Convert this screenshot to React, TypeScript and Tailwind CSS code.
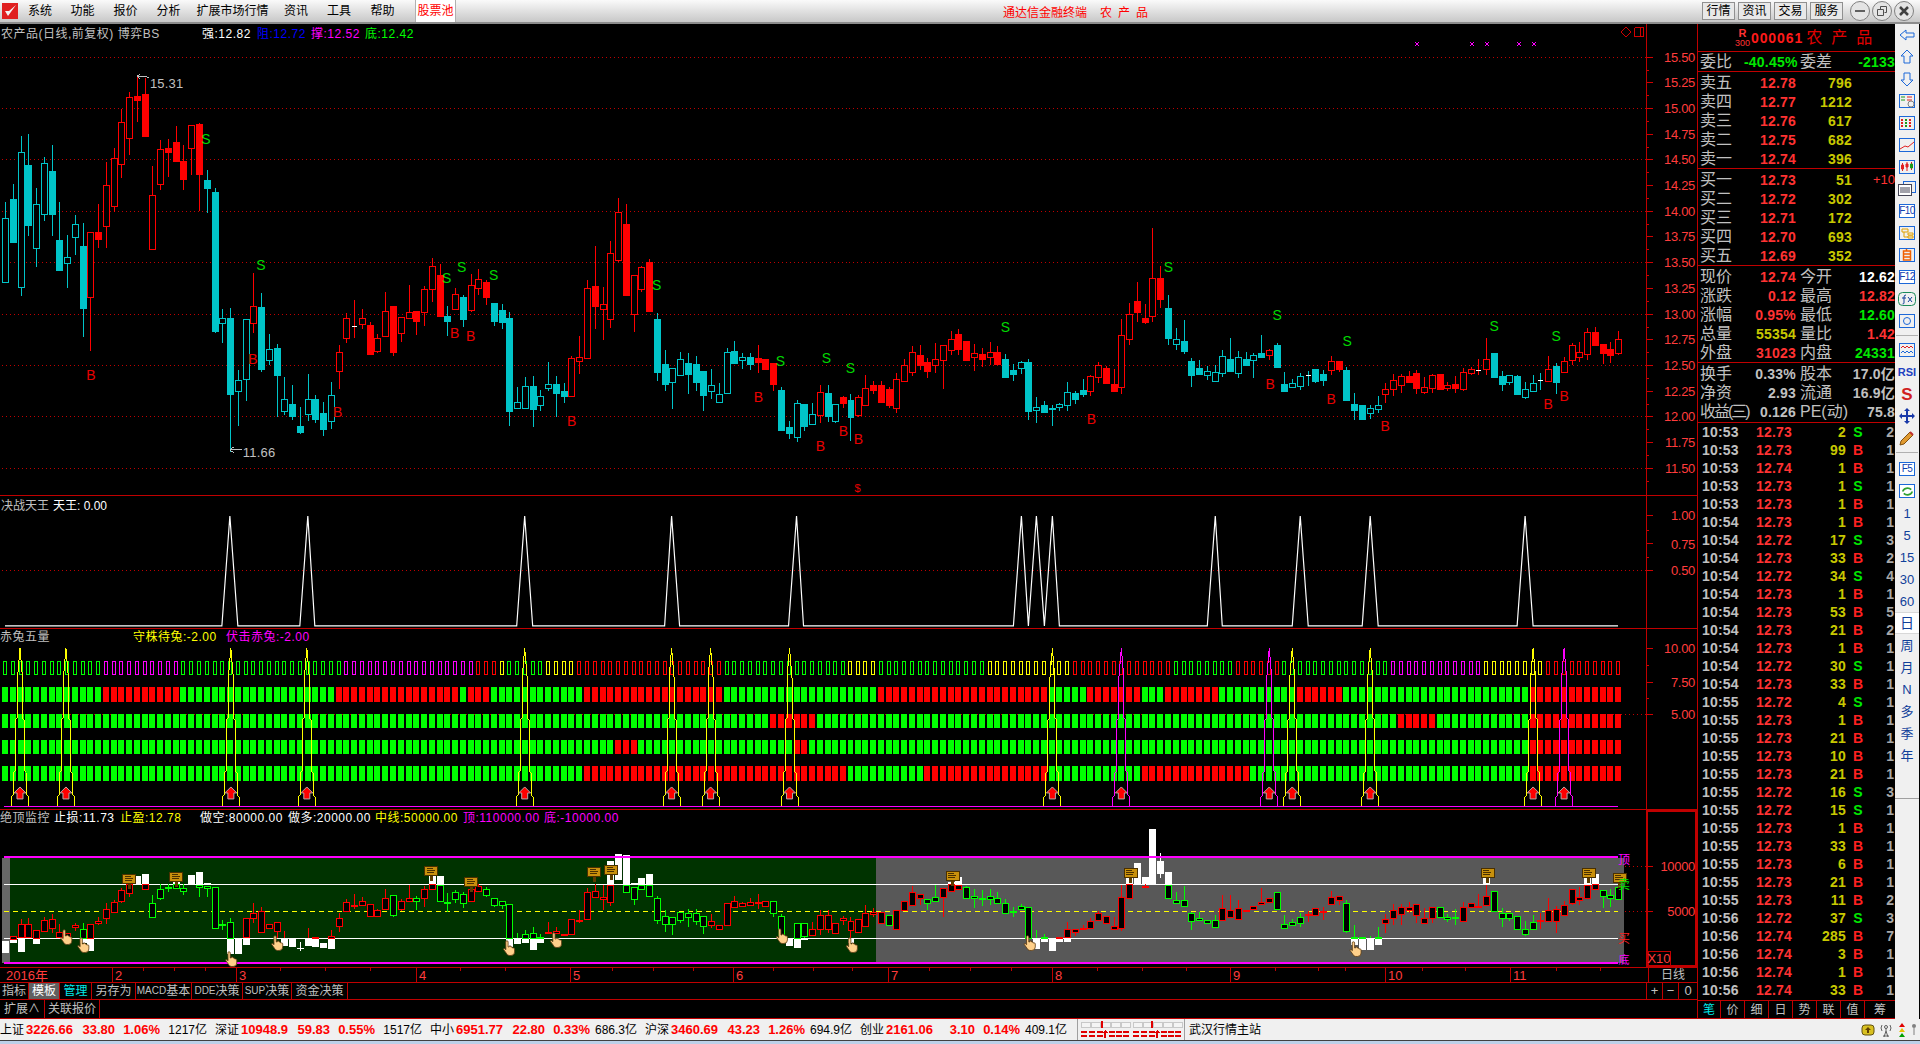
import type { ReactNode } from 'react';

type Bar = [string, number, number, number, number];

const RED = '#ff0000';
const CYAN = '#00c4c8';
const GREEN = '#00ff00';
const GRID = '#c00000';
const AXIS = '#ff3c3c';
const barX = (i: number) => Math.round(5 + 7.76 * i);

// main chart: type, body top, body bottom, wick top, wick bottom (page px)
const KLINE: Bar[] = [
  ['C',218,282,202,282],['c',199,243,184,243],['C',152,287,136,296],['c',165,226,134,236],['C',204,248,188,267],
  ['C',163,214,157,221],['c',171,215,145,236],['c',240,271,202,271],['C',257,263,235,288],['C',224,237,215,255],
  ['c',246,309,223,337],['R',232,297,232,351],['r',232,240,204,248],['R',185,226,162,248],['R',158,206,148,212],
  ['R',122,164,109,178],['R',97,138,92,155],['r',96,101,77,122],['r',94,137,78,137],['R',195,249,166,249],
  ['R',149,184,140,190],['r',148,153,139,177],['r',142,162,126,162],['r',161,180,145,190],['R',125,148,125,175],
  ['r',124,175,123,211],['c',180,189,170,213],['c',192,332,188,333],['C',318,323,309,343],['c',318,395,308,452],
  ['C',380,391,370,426],['C',319,379,319,401],['R',306,323,273,333],['c',307,370,293,372],['C',349,360,334,365],
  ['c',348,376,344,417],['C',399,411,377,415],['c',404,417,385,420],['c',426,433,407,434],['C',399,414,374,421],
  ['c',399,420,395,423],['c',413,430,402,436],['C',395,421,382,429],['R',352,371,345,389],['R',318,338,313,343],
  ['w',326,326,300,338],['R',318,324,309,329],['r',325,355,322,355],['R',338,351,334,353],['R',311,336,292,337],
  ['r',306,353,306,356],['R',317,333,317,342],['R',312,318,285,318],['r',311,322,311,335],['R',289,312,286,326],
  ['R',266,289,258,302],['r',275,317,264,317],['c',316,322,306,336],['R',294,309,288,309],['c',297,320,295,327],
  ['R',285,310,274,312],['R',279,288,269,295],['r',282,298,280,305],['c',303,322,303,326],['c',310,323,304,329],
  ['c',318,412,312,426],['C',402,408,387,408],['C',386,408,377,408],['c',386,410,376,427],['C',396,405,390,411],
  ['C',384,388,362,391],['c',384,394,376,417],['c',391,397,383,403],['R',358,396,356,397],['R',357,361,336,374],
  ['R',288,358,280,359],['r',286,307,246,329],['R',304,309,287,340],['R',253,319,241,328],['R',212,260,198,262],
  ['r',224,296,204,296],['R',275,314,275,332],['R',267,289,266,292],['r',262,312,259,312],['c',319,373,313,381],
  ['c',364,385,350,391],['C',368,382,368,409],['C',359,375,352,375],['c',363,375,353,394],['c',364,383,356,391],
  ['c',371,396,371,411],['C',385,391,369,399],['C',394,402,383,402],['C',352,393,348,393],['c',351,364,341,364],
  ['C',357,360,353,369],['c',357,365,353,370],['r',358,363,345,373],['r',359,370,359,370],['r',363,385,363,391],
  ['c',390,431,387,431],['c',427,434,421,439],['C',403,437,400,442],['c',404,427,404,431],['C',414,424,403,425],
  ['R',392,415,385,423],['c',393,417,385,422],['C',404,421,404,423],['r',397,404,396,408],['c',400,418,394,441],
  ['R',397,415,395,417],['R',388,405,375,405],['r',385,391,381,394],['r',385,403,381,403],['r',389,406,387,408],
  ['R',379,408,373,413],['R',365,381,359,381],['R',352,372,346,376],['r',355,366,345,370],['r',362,372,358,378],
  ['R',359,365,343,373],['R',345,360,345,389],['R',339,350,331,355],['r',334,350,329,355],['r',341,361,341,361],
  ['R',353,357,344,371],['r',354,360,348,367],['R',352,357,342,365],['r',352,365,346,365],['c',359,378,354,378],
  ['c',370,375,364,381],['C',362,368,361,374],['c',362,412,359,420],['C',407,410,397,423],['c',405,413,401,413],
  ['c',408,410,405,426],['C',404,407,403,411],['C',392,405,382,411],['c',393,400,391,404],['c',390,395,379,397],
  ['R',376,391,375,396],['R',365,377,362,383],['r',368,384,366,384],['r',384,392,369,392],['R',335,387,319,394],
  ['R',314,339,303,345],['r',301,313,282,322],['r',318,323,304,324],['R',278,316,228,322],['r',278,300,266,308],
  ['c',308,339,295,345],['C',339,344,328,350],['c',341,352,320,354],['c',361,376,358,387],['c',368,375,360,375],
  ['C',371,375,366,380],['C',372,381,365,381],['C',356,373,350,377],['c',359,372,338,372],['C',357,373,351,378],
  ['c',359,366,352,366],['C',355,360,353,378],['c',353,358,335,358],['R',350,355,349,360],['c',345,368,343,368],
  ['c',384,392,372,392],['C',383,387,379,387],['C',376,386,373,390],['W',375,375,371,386],['c',369,382,369,383],
  ['c',374,381,370,386],['R',361,370,356,375],['r',361,370,361,372],['c',370,401,367,401],['c',404,411,393,420],
  ['c',405,420,405,420],['C',408,413,405,419],['C',405,409,396,413],['R',389,394,383,403],['R',380,389,374,396],
  ['R',376,385,374,393],['r',376,383,371,383],['r',373,389,370,394],['R',387,392,377,394],['R',375,388,374,393],
  ['r',374,390,374,390],['R',385,388,382,391],['r',384,389,376,393],['R',372,389,368,391],['R',369,373,367,375],
  ['w',370,370,359,375],['R',359,369,338,375],['c',353,378,353,378],['c',376,385,371,391],['C',375,382,375,385],
  ['c',376,395,375,395],['C',389,397,382,399],['C',383,391,375,391],['W',380,380,373,390],['R',369,381,356,381],
  ['c',366,383,363,394],['R',361,372,357,372],['R',345,360,343,365],['R',352,357,342,362],['R',332,354,328,360],
  ['r',332,346,327,346],['r',344,354,344,364],['r',349,356,342,363],['R',339,353,331,355],
];

// bottom chart: type, body top/bottom, wick top/bottom, in y of the 3x crop (810 + y / 3)
const MONITOR: Bar[] = [
  ['n',0,0,0,0],['r',378,388,378,388],['r',343,382,327,382],['r',343,380,325,380],['r',360,385,360,385],['r',331,362,322,362],
  ['r',327,355,312,370],['r',367,382,342,382],['r',370,378,370,378],['r',346,352,340,362],['g',356,385,340,385],['r',341,385,341,385],
  ['r',333,338,320,345],['r',298,325,280,342],['r',275,307,270,307],['r',241,274,233,280],['r',222,250,222,260],['n',0,0,0,0],
  ['r',222,236,222,236],['g',280,322,255,322],['g',238,265,222,270],['g',230,230,222,245],['g',222,235,222,235],['g',233,244,222,255],
  ['n',0,0,0,0],['g',224,230,224,262],['g',229,235,229,262],['g',232,355,232,355],['g',341,341,330,360],['g',335,385,325,385],
  ['n',0,0,0,0],['r',325,382,325,382],['r',310,325,278,340],['r',304,365,290,365],['r',343,355,343,355],['r',337,364,337,385],
  ['r',0,0,364,385],['n',0,0,0,0],['n',0,0,0,0],['r',0,0,353,385],['r',382,385,382,385],['n',0,0,0,0],
  ['r',377,385,360,385],['r',323,347,310,365],['r',277,304,268,304],['r',285,285,252,298],['r',274,284,262,284],['r',283,319,283,319],
  ['r',301,319,298,319],['r',263,298,238,298],['g',256,316,256,322],['r',272,296,268,304],['r',265,274,225,274],['g',264,274,258,300],
  ['r',236,265,228,290],['r',222,236,222,236],['g',224,272,224,272],['g',277,277,250,305],['g',246,268,240,280],['g',252,280,245,295],
  ['r',238,272,222,272],['r',228,244,222,244],['g',236,254,230,262],['g',265,285,265,292],['g',274,286,274,296],['g',283,385,283,385],
  ['g',0,0,370,385],['g',371,385,360,385],['g',368,385,352,385],['g',380,385,373,385],['r',366,366,337,370],['r',362,370,352,370],
  ['r',371,371,371,371],['r',328,372,328,372],['r',330,330,300,340],['r',245,328,234,328],['r',242,262,222,262],['r',262,268,225,300],
  ['r',225,277,225,287],['n',0,0,0,0],['g',225,245,225,245],['g',230,268,230,285],['g',225,236,225,236],['g',225,257,225,257],
  ['g',265,329,258,342],['g',318,341,300,365],['g',322,341,322,375],['g',307,329,307,340],['g',310,322,297,352],['g',310,332,297,345],
  ['g',319,347,319,372],['r',334,344,312,355],['r',346,358,346,358],['r',280,344,280,344],['r',274,290,258,290],['r',280,287,275,287],
  ['r',277,284,265,284],['r',275,275,252,298],['r',272,287,272,287],['g',274,308,274,320],['g',318,375,313,375],['n',0,0,0,0],
  ['g',340,385,340,385],['g',340,378,340,385],['r',358,376,335,376],['r',314,358,300,375],['r',316,356,300,368],['r',340,370,340,370],
  ['r',324,331,318,345],['r',334,361,320,385],['r',328,365,328,365],['r',310,347,285,347],['r',305,311,295,320],['r',307,338,307,338],
  ['g',316,346,316,346],['r',300,358,300,358],['r',272,301,272,301],['r',245,286,228,286],['r',251,265,251,285],['g',268,280,268,300],
  ['g',262,274,225,274],['r',233,262,233,322],['r',222,244,222,244],['r',225,237,225,237],['g',230,265,228,265],['g',257,265,237,294],
  ['g',263,263,240,288],['g',259,268,238,285],['g',263,280,245,280],['g',278,310,268,310],['g',304,304,292,320],['g',289,298,283,298],
  ['g',290,385,290,385],['g',0,0,360,385],['g',380,385,372,385],['n',0,0,0,0],['r',380,385,380,385],['r',357,381,335,381],
  ['r',358,366,358,378],['r',353,358,345,358],['r',332,354,325,354],['r',310,331,302,331],['r',317,340,317,340],['r',348,357,320,357],
  ['r',260,355,225,363],['r',222,265,222,265],['n',0,0,0,0],['r',228,228,222,232],['n',0,0,0,0],['n',0,0,0,0],
  ['g',225,265,225,265],['g',271,278,247,278],['g',271,287,228,287],['g',310,333,305,360],['g',325,331,305,331],['g',331,338,331,338],
  ['g',331,350,315,350],['r',295,331,255,331],['r',301,322,256,322],['r',295,328,270,328],['r',299,304,299,304],['r',287,296,287,300],
  ['r',277,281,235,281],['r',265,277,265,277],['g',246,298,246,298],['g',343,355,315,355],['g',337,345,327,345],['g',320,340,308,350],
  ['r',312,312,303,335],['r',293,316,293,316],['r',304,304,290,330],['r',260,283,243,283],['r',257,271,257,285],['g',280,362,270,368],
  ['g',380,385,345,385],['g',382,385,382,385],['g',0,0,378,385],['g',380,385,352,385],['r',328,340,312,368],['r',299,324,282,345],
  ['r',290,313,282,345],['r',290,299,275,310],['r',281,316,281,340],['r',325,338,295,338],['r',290,325,290,338],['g',290,322,290,322],
  ['g',322,328,312,335],['g',320,320,298,345],['r',290,334,275,334],['r',280,290,280,290],['r',288,288,252,295],['r',257,286,225,286],
  ['g',242,304,242,304],['g',310,325,295,350],['g',310,325,310,332],['g',317,358,317,358],['g',356,373,333,378],['g',337,358,316,358],
  ['r',330,330,310,358],['r',301,332,265,332],['r',296,332,288,368],['r',284,314,272,314],['r',238,280,238,285],['r',260,271,232,286],
  ['r',224,265,224,265],['r',222,236,222,236],['g',241,259,241,295],['g',256,265,238,292],['g',232,268,232,268],
];

const WHITE_BARS = [
  [0,393,428],[1,388,400],[2,382,425],[4,385,402],[10,385,400],[11,385,422],[17,197,222],[18,192,222],[22,215,222],[24,196,222],[25,186,222],
  [26,218,222],[29,385,433],[30,385,431],[31,385,404],[36,385,408],[37,385,410],[39,385,407],[40,385,410],[41,400,415],[42,385,418],[55,198,222],
  [56,198,222],[65,385,410],[66,385,402],[67,385,398],[68,385,420],[69,385,398],[78,152,222],[79,133,210],[80,135,222],[81,220,222],[82,205,222],
  [83,192,222],[101,385,408],[102,385,413],[103,385,390],[109,385,400],[122,215,222],[123,200,222],[133,385,417],[134,385,397],[135,385,423],
  [136,385,395],[137,385,395],[145,205,222],[146,160,222],[147,200,222],[148,57,222],[149,153,192],[150,186,222],[174,385,405],[175,385,420],
  [176,385,420],[177,385,404],[191,205,222],[204,195,222],[205,192,222],
];

const MARKS: [string, number, number][] = [
  ['S',206,139],['B',91,375],['S',261,265],['B',253,359],['S',447,278],['B',338,412],['S',462,267],['B',455,333],['B',471,336],['S',494,275],
  ['B',572,421],['S',657,285],['B',759,397],['S',781,361],['S',827,358],['S',851,368],['B',821,446],['B',844,431],['B',859,439],['S',1006,327],
  ['B',1092,419],['S',1169,267],['S',1278,315],['B',1271,384],['B',1332,399],['S',1348,341],['B',1386,426],['S',1495,326],['B',1549,404],
  ['B',1565,396],['S',1557,336],
];

const PEAKS = [29, 39, 67, 86, 102, 131, 133, 135, 156, 167, 176, 196];
const ARROWS: [number, string][] = [
  [20,'#ffff00'],[66,'#ffff00'],[231,'#ffff00'],[307,'#ffff00'],[525,'#ffff00'],[672,'#ffff00'],[711,'#ffff00'],[790,'#ffff00'],
  [1053,'#ffff00'],[1122,'#ff00ff'],[1270,'#ff00ff'],[1293,'#ffff00'],[1371,'#ffff00'],[1534,'#ffff00'],[1565,'#ff00ff'],
];
const HANDS = [[66,939],[83,947],[231,961],[277,945],[509,950],[556,942],[782,938],[852,947],[1030,945],[1356,951]];
const SIGNS = [[129,879],[176,877],[431,871],[471,882],[594,872],[611,870],[953,876],[1131,873],[1488,873],[1589,873],[1620,878]];

// signal rows of the 赤兔五量 panel: from-index, to-index of each run
const ROW_TOP: [number, number, string][] = [
  [0,12,'#00ff00'],[13,22,'#ff00ff'],[23,43,'#00ff00'],[44,60,'#ff00ff'],[61,63,'#ff0000'],[64,64,'#ffff00'],[65,69,'#00ff00'],[70,73,'#ffff00'],
  [74,92,'#ff0000'],[93,108,'#00ff00'],[109,112,'#ffff00'],[113,126,'#00ff00'],[127,137,'#ffff00'],[138,150,'#ff0000'],[151,158,'#00ff00'],
  [159,164,'#ff0000'],[165,178,'#00ff00'],[179,190,'#ff00ff'],[191,198,'#ffff00'],[199,208,'#ff0000'],
];
const ROW_REDS: [number, number][][] = [
  [[13,19],[20,22],[43,58],[60,62],[75,92],[113,134],[140,146],[150,156],[167,172],[197,208]],
  [[99,104],[180,184],[197,208]],
  [[79,81],[102,103],[197,208]],
  [[75,108],[119,134],[147,160],[197,208]],
];

const TICKS: [string, string, string, string, string][] = [
  ['10:53','12.73','2','S','2'],['10:53','12.73','99','B','1'],['10:53','12.74','1','B','1'],['10:53','12.73','1','S','1'],
  ['10:53','12.73','1','B','1'],['10:54','12.73','1','B','1'],['10:54','12.72','17','S','3'],['10:54','12.73','33','B','2'],
  ['10:54','12.72','34','S','4'],['10:54','12.73','1','B','1'],['10:54','12.73','53','B','5'],['10:54','12.73','21','B','2'],
  ['10:54','12.73','1','B','1'],['10:54','12.72','30','S','1'],['10:54','12.73','33','B','1'],['10:55','12.72','4','S','1'],
  ['10:55','12.73','1','B','1'],['10:55','12.73','21','B','1'],['10:55','12.73','10','B','1'],['10:55','12.73','21','B','1'],
  ['10:55','12.72','16','S','3'],['10:55','12.72','15','S','1'],['10:55','12.73','1','B','1'],['10:55','12.73','33','B','1'],
  ['10:55','12.73','6','B','1'],['10:55','12.73','21','B','1'],['10:55','12.73','11','B','2'],['10:56','12.72','37','S','3'],
  ['10:56','12.74','285','B','7'],['10:56','12.74','3','B','1'],['10:56','12.74','1','B','1'],['10:56','12.74','33','B','1'],
];

function AxisLabel({ y, children }: { y: number; children: string }) {
  return (
    <text x={1696} y={y + 5} textAnchor="end" fontSize={13} fill={AXIS} letterSpacing={-0.3}>
      {children}
    </text>
  );
}

function Tick({ y, major }: { y: number; major?: boolean }) {
  return <line x1={1648} x2={major ? 1654 : 1650} y1={y + 0.5} y2={y + 0.5} stroke="#d00000" />;
}

function Dotted({ y, x1 = 2, x2 = 1654 }: { y: number; x1?: number; x2?: number }) {
  return <line x1={x1} x2={x2} y1={y + 0.5} y2={y + 0.5} stroke={GRID} strokeDasharray="1 3" />;
}

function VerticalAxis({ y1, y2 }: { y1: number; y2: number }) {
  return <line x1={1647.5} x2={1647.5} y1={y1} y2={y2} stroke="#c00000" />;
}

function MainChart() {
  const labels = ['15.50','15.25','15.00','14.75','14.50','14.25','14.00','13.75','13.50','13.25','13.00','12.75','12.50','12.25','12.00','11.75','11.50'];
  return (
    <svg className="block h-[471px] w-full" viewBox="0 24 1698 471" shapeRendering="crispEdges">
      {labels.map((l, i) => {
        const y = Math.round(56.5 + 25.7 * i);
        return (
          <g key={l}>
            {i % 2 === 0 && <Dotted y={y} />}
            <Tick y={y} major />
            <Tick y={y + 13} />
            <AxisLabel y={y}>{l}</AxisLabel>
          </g>
        );
      })}
      <VerticalAxis y1={24} y2={495} />
      {KLINE.map(([t, bt, bb, wt, wb], i) => {
        const x = barX(i);
        const isRed = t === 'r' || t === 'R' || t === 'w';
        const color = isRed ? RED : CYAN;
        return (
          <g key={i}>
            <line x1={x + 0.5} x2={x + 0.5} y1={wt} y2={wb} stroke={color} />
            {(t === 'r' || t === 'c') && <rect x={x - 3} y={bt} width={7} height={bb - bt} fill={color} />}
            {(t === 'R' || t === 'C') && (
              <rect x={x - 2.5} y={bt + 0.5} width={6} height={bb - bt} fill="#000" stroke={color} />
            )}
            {(t === 'w' || t === 'W') && <line x1={x - 2} x2={x + 3} y1={bt + 0.5} y2={bt + 0.5} stroke="#fff" />}
          </g>
        );
      })}
      {MARKS.map(([m, x, y], i) => (
        <text key={i} x={x} y={y + 5} textAnchor="middle" fontSize={14} fill={m === 'S' ? '#00d800' : '#e80000'} shapeRendering="auto">
          {m}
        </text>
      ))}
      <text x={858} y={492} textAnchor="middle" fontSize={11} fill="#e80000">$</text>
      <path d="M137 76l3 3M137 76l3-2M137 76h8l4 2" fill="none" stroke="#c0c0c0" />
      <text x={150} y={88} fontSize={13} fill="#c0c0c0" letterSpacing={0.2}>15.31</text>
      <path d="M230 450h12M230 450l4-3M230 450l4 3" fill="none" stroke="#c0c0c0" />
      <text x={243} y={457} fontSize={13} fill="#c0c0c0" letterSpacing={0.2}>11.66</text>
      {[1418, 1473, 1488, 1520, 1535].map((x) => (
        <path key={x} d={`M${x - 2} 42l4 4M${x + 2} 42l-4 4`} stroke="#ff00ff" fill="none" />
      ))}
      <path d="M1627 27l5 5-5 5-5-5z" fill="none" stroke="#d00000" />
      <path d="M1635.5 27.5h9v9h-9zM1641.5 27.5v9" fill="none" stroke="#d00000" />
    </svg>
  );
}

function DecisionChart() {
  const pts = KLINE.map((_, i) => `${barX(i)},${PEAKS.includes(i) ? 516 : 626}`).join(' ');
  return (
    <svg className="block h-[132px] w-full" viewBox="0 496 1698 132">
      <g shapeRendering="crispEdges">
        <Dotted y={570} />
        <Tick y={515} major />
        <Tick y={530} />
        <Tick y={543} major />
        <Tick y={557} />
        <Tick y={570} major />
        <VerticalAxis y1={496} y2={628} />
      </g>
      <AxisLabel y={515}>1.00</AxisLabel>
      <AxisLabel y={544}>0.75</AxisLabel>
      <AxisLabel y={570}>0.50</AxisLabel>
      <polyline points={pts} fill="none" stroke="#fff" strokeWidth={1.2} />
    </svg>
  );
}

function RabbitChart() {
  const topColor = (i: number) => ROW_TOP.find(([a, b]) => i >= a && i <= b)?.[2] ?? '#00ff00';
  const rows = [
    [687, 15],
    [714, 14],
    [740, 14],
    [766, 15],
  ];
  return (
    <svg className="block h-[180px] w-full" viewBox="0 629 1698 180" shapeRendering="crispEdges">
      <Tick y={648} major />
      <Tick y={665} />
      <Tick y={682} major />
      <Tick y={698} />
      <Tick y={714} major />
      <VerticalAxis y1={629} y2={809} />
      <AxisLabel y={648}>10.00</AxisLabel>
      <AxisLabel y={682}>7.50</AxisLabel>
      <AxisLabel y={714}>5.00</AxisLabel>
      <Dotted y={714} />
      {KLINE.map((_, i) => {
        const x = barX(i);
        return (
          <g key={i}>
            <rect x={x - 1.5} y={661.5} width={3} height={13} fill="none" stroke={topColor(i)} />
            {rows.map(([y, h], r) => (
              <rect
                key={r}
                x={x - 3}
                y={y}
                width={6}
                height={h}
                fill={ROW_REDS[r].some(([a, b]) => i >= a && i <= b) ? RED : GREEN}
              />
            ))}
          </g>
        );
      })}
      <rect x={4} y={806} width={1615} height={1} fill="#ff00ff" />
      {ARROWS.map(([cx, color]) => (
        <g key={cx}>
          <path
            d={`M${cx - 8.5} 806V797L${cx - 6.5} 795V773L${cx - 4.5} 771V720L${cx - 2.5} 718V678L${cx} 648L${cx + 2.5} 678V718L${cx + 4.5} 720V771L${cx + 6.5} 773V795L${cx + 8.5} 797V806`}
            fill="none"
            stroke={color}
          />
          <path
            d={`M${cx} 787l6 6h-3v6h-6v-6h-3z`}
            fill={RED}
            stroke="#b8a8a8"
            shapeRendering="auto"
          />
        </g>
      ))}
    </svg>
  );
}

function Hand({ x, y }: { x: number; y: number }) {
  return (
    <path
      transform={`translate(${x} ${y})`}
      d="M-3-8a1.2 1.2 0 0 1 2.4 0v5l1 0 .1-1h1.5l.2 1h1.4l.2 1h1.2q.9 0 .9 1v3q0 3.500-3.500 3.500h-2q-2 0-3-2.500l-2.500-3.500q-.4-1.200 1.100-.8l1.200 1z"
      fill="#ffd08a"
      stroke="#5a3a12"
      strokeWidth={0.8}
    />
  );
}

function Sign({ x, y }: { x: number; y: number }) {
  return (
    <g transform={`translate(${x} ${y})`} shapeRendering="crispEdges">
      <rect x={-1} y={4} width={3} height={6} fill="#5c3c00" />
      <rect x={-6} y={-5} width={13} height={9} fill="#c8900c" stroke="#4a3000" />
      <rect x={-4} y={-3} width={6} height={1} fill="#4a3000" />
      <rect x={-4} y={-1} width={8} height={1} fill="#4a3000" />
      <rect x={-4} y={1} width={7} height={1} fill="#4a3000" />
    </g>
  );
}

function MonitorChart() {
  const top = (v: number) => Math.round(810 + v / 3);
  return (
    <svg className="block h-[157px] w-full" viewBox="0 810 1698 157" shapeRendering="crispEdges">
      <Dotted y={866} x1={1626} />
      <Dotted y={911} x1={1626} />
      <Tick y={866} major />
      <Tick y={889} />
      <Tick y={911} major />
      <rect x={1648} y={811} width={49} height={155} fill="none" stroke="#c00000" strokeWidth={2} />
      <AxisLabel y={866}>10000</AxisLabel>
      <AxisLabel y={911}>5000</AxisLabel>
      <rect x={1649.5} y={951.5} width={22} height={14} fill="none" stroke="#c00000" />
      <text x={1660} y={963} textAnchor="middle" fontSize={13} fill={AXIS}>X10</text>

      <rect x={2} y={858} width={8} height={105} fill="#666666" />
      <rect x={10} y={858} width={867} height={105} fill="#003300" />
      <rect x={877} y={858} width={748} height={105} fill="#585858" />
      {WHITE_BARS.map(([i, a, b]) => (
        <rect key={i} x={barX(i) - 3} y={top(a)} width={7} height={top(b) - top(a)} fill="#fff" />
      ))}
      <line x1={barX(149) + 0.5} x2={barX(149) + 0.5} y1={top(130)} y2={top(205)} stroke="#fff" />
      <rect x={barX(38) - 3} y={top(415)} width={7} height={1} fill="#fff" />
      <line x1={barX(38) + 0.5} x2={barX(38) + 0.5} y1={top(395)} y2={top(422)} stroke="#fff" />
      <rect x={4} y={856} width={1615} height={2} fill="#ff00ff" />
      <rect x={4} y={962} width={1615} height={2} fill="#ff00ff" />
      <rect x={4} y={884} width={1615} height={1} fill="#fff" />
      <rect x={4} y={938} width={1615} height={1} fill="#fff" />
      <line x1={4} x2={1619} y1={911.5} y2={911.5} stroke="#ffff00" strokeDasharray="5 4" />
      {MONITOR.map(([t, bt, bb, wt, wb], i) => {
        if (t === 'n') return null;
        const x = barX(i);
        const color = t === 'r' ? RED : GREEN;
        const h = top(bb) - top(bt);
        return (
          <g key={i}>
            <line x1={x + 0.5} x2={x + 0.5} y1={top(wt)} y2={top(wb)} stroke={color} />
            {bt > 0 && h < 2 && <rect x={x - 3} y={top(bt)} width={7} height={2} fill={color} />}
            {bt > 0 && h >= 2 && (
              <rect x={x - 2.5} y={top(bt) + 0.5} width={6} height={h} fill="#000" stroke={color} />
            )}
          </g>
        );
      })}
      {SIGNS.map(([x, y]) => (
        <Sign key={x} x={x} y={y} />
      ))}
      <g shapeRendering="auto">
        {HANDS.map(([x, y]) => (
          <Hand key={x} x={x} y={y} />
        ))}
      </g>
      <text x={1625} y={864} textAnchor="middle" fontSize={12} fill="#ff00ff">顶</text>
      <text x={1625} y={889} textAnchor="middle" fontSize={12} fill="#00e000">卖</text>
      <text x={1625} y={943} textAnchor="middle" fontSize={12} fill="#ff2020">买</text>
      <text x={1625} y={964} textAnchor="middle" fontSize={11} fill="#ff00ff">底</text>
    </svg>
  );
}

function DateAxis() {
  const months: [number, string][] = [
    [3,'2016年'],[112,'2'],[236,'3'],[416,'4'],[570,'5'],[733,'6'],[888,'7'],[1052,'8'],[1230,'9'],[1385,'10'],[1510,'11'],
  ];
  const minor = [143,174,205,280,325,370,460,505,612,653,693,773,813,852,929,970,1011,1097,1142,1186,1275,1318,1345,1422,1465,1556,1600];
  return (
    <svg className="block h-[15px] w-[1648px]" viewBox="0 967 1648 15" shapeRendering="crispEdges">
      {minor.map((x) => (
        <line key={x} x1={x + 0.5} x2={x + 0.5} y1={967} y2={970} stroke="#c00000" />
      ))}
      {months.map(([x, l], i) => (
        <g key={l}>
          {i > 0 && <line x1={x + 0.5} x2={x + 0.5} y1={967} y2={983} stroke="#c00000" />}
          <text x={x + 3} y={979} fontSize={13} fill={AXIS}>{l}</text>
        </g>
      ))}
    </svg>
  );
}

function Cell({ className, children }: { className: string; children: ReactNode }) {
  return <div className={`flex items-center justify-center whitespace-nowrap border-r border-[#c00000] text-[12px] leading-none ${className}`}>{children}</div>;
}

function ChartArea() {
  return (
    <div className="relative -ml-px flex w-[1698px] flex-col border-l border-[#808080]">
      <div className="relative h-[472px] border-b border-[#c00000]">
        <MainChart />
        <div className="absolute left-[1px] top-[1px] flex h-[18px] items-center text-[12px] tracking-[0.5px] text-[#c0c0c0]">
          农产品(日线,前复权) 博弈BS
          <span className="absolute left-[201px] whitespace-nowrap text-white">强:12.82</span>
          <span className="absolute left-[256px] whitespace-nowrap text-[#0000ff]">阻:12.72</span>
          <span className="absolute left-[310px] whitespace-nowrap text-[#ff00ff]">撑:12.52</span>
          <span className="absolute left-[364px] whitespace-nowrap text-[#00ff00]">底:12.42</span>
        </div>
      </div>
      <div className="relative h-[133px] border-b border-[#c00000]">
        <DecisionChart />
        <div className="absolute left-[1px] top-[1px] flex h-[17px] items-center gap-[4px] text-[12px] text-[#c0c0c0]">
          决战天王 <span className="text-white">天王: 0.00</span>
        </div>
      </div>
      <div className="relative h-[181px] border-b border-[#c00000]">
        <RabbitChart />
        <div className="absolute left-0 top-0 flex h-[16px] items-center text-[12px] tracking-[0.5px] text-[#c0c0c0]">
          赤兔五量
          <span className="absolute left-[133px] whitespace-nowrap text-[#ffff00]">守株待兔:-2.00</span>
          <span className="absolute left-[226px] whitespace-nowrap text-[#ff00ff]">伏击赤兔:-2.00</span>
        </div>
      </div>
      <div className="relative h-[157px]">
        <MonitorChart />
        <div className="absolute left-0 top-0 flex h-[16px] items-center text-[12px] tracking-[0.5px] text-[#c0c0c0]">
          绝顶监控
          <span className="absolute left-[54px] whitespace-nowrap text-white">止损:11.73</span>
          <span className="absolute left-[120px] whitespace-nowrap text-[#ffff00]">止盈:12.78</span>
          <span className="absolute left-[200px] whitespace-nowrap text-white">做空:80000.00</span>
          <span className="absolute left-[288px] whitespace-nowrap text-white">做多:20000.00</span>
          <span className="absolute left-[375px] whitespace-nowrap text-[#ffff00]">中线:50000.00</span>
          <span className="absolute left-[463px] whitespace-nowrap text-[#ff00ff]">顶:110000.00</span>
          <span className="absolute left-[544px] whitespace-nowrap text-[#ff00ff]">底:-10000.00</span>
        </div>
      </div>
      <div className="flex h-[16px] border-y border-[#c00000]">
        <DateAxis />
        <div className="flex flex-1 items-center justify-center border-l border-[#c00000] text-[12px] leading-none text-[#c0c0c0]">日线</div>
      </div>
      <div className="flex h-[17px] border-b border-[#c00000] text-[#c0c0c0]">
        <Cell className="w-[29px]">指标</Cell>
        <Cell className="w-[31px] bg-[#606060] text-white">模板</Cell>
        <Cell className="w-[32px] text-[#00e8e8]">管理</Cell>
        <Cell className="w-[44px]">另存为</Cell>
        <Cell className="w-[56px]"><span className="text-[10px]">MACD</span>基本</Cell>
        <Cell className="w-[51px]"><span className="text-[10px]">DDE</span>决策</Cell>
        <Cell className="w-[49px]"><span className="text-[10px]">SUP</span>决策</Cell>
        <Cell className="w-[56px]">资金决策</Cell>
        <div className="flex-1" />
        <div className="flex w-[51px] border-l border-[#c00000] text-[13px]">
          <div className="flex w-[16px] items-center justify-center border-r border-[#c00000]">+</div>
          <div className="flex w-[16px] items-center justify-center border-r border-[#c00000]">−</div>
          <div className="flex flex-1 items-center justify-center">0</div>
        </div>
      </div>
      <div className="flex h-[19px] border-b border-[#c00000] text-[#c0c0c0]">
        <Cell className="w-[45px]">扩展∧</Cell>
        <Cell className="w-[55px]">关联报价</Cell>
      </div>
    </div>
  );
}

const label = 'text-[16px] leading-none text-[#c0c0c0] whitespace-nowrap';
const num = 'font-bold text-[14px] leading-none text-right tracking-[0.2px] whitespace-nowrap';

function BookRow({ name, price, vol, extra }: { name: string; price: string; vol: string; extra?: string }) {
  return (
    <div className="flex h-[19px] items-center pl-[2px]">
      <span className={`w-[48px] ${label}`}>{name}</span>
      <span className={`w-[48px] text-[#ff3232] ${num}`}>{price}</span>
      <span className={`w-[56px] text-[#c8c800] ${num}`}>{vol}</span>
      {extra && <span className="w-[43px] text-right text-[13px] leading-none text-[#ff3232]">{extra}</span>}
    </div>
  );
}

function QuoteRow({ a, av, ac, b, bv, bc }: { a: string; av: string; ac: string; b: string; bv: string; bc: string }) {
  return (
    <div className="flex h-[19px] items-center pl-[2px]">
      <span className={`w-[48px] ${label} ${a.length > 2 ? 'tracking-[-2px]' : ''}`}>{a}</span>
      <span className={`w-[48px] ${num} ${ac}`}>{av}</span>
      <span className={`ml-[4px] w-[44px] ${label}`}>{b}</span>
      <span className={`w-[51px] ${num} ${bc}`}>{bv}</span>
    </div>
  );
}

function OrderPanel() {
  return (
    <div className="flex w-[198px] flex-col border-l border-[#c00000]">
      <div className="flex h-[28px] items-center border-b border-[#c00000]">
        <div className="ml-[36px] flex w-[17px] flex-col items-center text-[#ff3232]">
          <span className="text-[11px] font-bold leading-[10px]">R</span>
          <span className="text-[9px] leading-[10px]">300</span>
        </div>
        <span className="text-[14px] font-bold leading-none tracking-[0.9px] text-[#ff1a1a]">000061</span>
        <span className="ml-[3px] text-[16px] leading-none tracking-[9px] text-[#e00000]">农产品</span>
      </div>
      <div className="flex h-[20px] items-center border-b border-[#c00000] pl-[2px]">
        <span className={`w-[44px] ${label}`}>委比</span>
        <span className={`w-[52px] text-[#00e800] ${num}`}>-40.45%</span>
        <span className={`ml-[4px] w-[44px] ${label}`}>委差</span>
        <span className={`w-[51px] text-[#00e800] ${num}`}>-2133</span>
      </div>
      <div className="h-[97px] border-b border-[#c00000] pt-[1px]">
        <BookRow name="卖五" price="12.78" vol="796" />
        <BookRow name="卖四" price="12.77" vol="1212" />
        <BookRow name="卖三" price="12.76" vol="617" />
        <BookRow name="卖二" price="12.75" vol="682" />
        <BookRow name="卖一" price="12.74" vol="396" />
      </div>
      <div className="h-[97px] border-b border-[#c00000] pt-[1px]">
        <BookRow name="买一" price="12.73" vol="51" extra="+10" />
        <BookRow name="买二" price="12.72" vol="302" />
        <BookRow name="买三" price="12.71" vol="172" />
        <BookRow name="买四" price="12.70" vol="693" />
        <BookRow name="买五" price="12.69" vol="352" />
      </div>
      <div className="h-[97px] border-b border-[#c00000] pt-[1px]">
        <QuoteRow a="现价" av="12.74" ac="text-[#ff3232]" b="今开" bv="12.62" bc="text-white" />
        <QuoteRow a="涨跌" av="0.12" ac="text-[#ff3232]" b="最高" bv="12.82" bc="text-[#ff3232]" />
        <QuoteRow a="涨幅" av="0.95%" ac="text-[#ff3232]" b="最低" bv="12.60" bc="text-[#00e800]" />
        <QuoteRow a="总量" av="55354" ac="text-[#c8c800]" b="量比" bv="1.42" bc="text-[#ff3232]" />
        <QuoteRow a="外盘" av="31023" ac="text-[#ff3232]" b="内盘" bv="24331" bc="text-[#00e800]" />
      </div>
      <div className="h-[60px] border-b border-[#c00000] pt-[1px]">
        <QuoteRow a="换手" av="0.33%" ac="text-[#c0c0c0]" b="股本" bv="17.0亿" bc="text-[#c0c0c0]" />
        <QuoteRow a="净资" av="2.93" ac="text-[#c0c0c0]" b="流通" bv="16.9亿" bc="text-[#c0c0c0]" />
        <QuoteRow a="收益(三)" av="0.126" ac="text-[#c0c0c0]" b="PE(动)" bv="75.8" bc="text-[#c0c0c0]" />
      </div>
      <div className="flex-1">
        {TICKS.map(([t, p, v, s, n], i) => (
          <div key={i} className="flex h-[18px] items-center pl-[4px]">
            <span className="w-[34px] text-[14px] font-bold leading-none tracking-[0.2px] text-[#c0c0c0]">{t}</span>
            <span className={`w-[56px] text-[#ff3232] ${num}`}>{p}</span>
            <span className={`w-[54px] text-[#c8c800] ${num}`}>{v}</span>
            <span className={`w-[24px] text-center text-[14px] font-bold leading-none ${s === 'S' ? 'text-[#00e800]' : 'text-[#ff2020]'}`}>{s}</span>
            <span className="w-[24px] text-right text-[14px] font-bold leading-none text-[#a8a8a8]">{n}</span>
          </div>
        ))}
      </div>
      <div className="flex h-[19px] border-y border-[#c00000] text-[12px] leading-none text-[#c0c0c0]">
        <div className="flex w-[23px] items-center justify-center border-r border-[#c00000] text-[#00e8e8]">笔</div>
        {['价', '细', '日', '势', '联', '值'].map((t) => (
          <div key={t} className="flex w-[24px] items-center justify-center border-r border-[#c00000]">{t}</div>
        ))}
        <div className="flex flex-1 items-center justify-center">筹</div>
      </div>
    </div>
  );
}

const BLUE = '#1c68d8';

function Box({ children }: { children: ReactNode }) {
  return <div className="flex h-[14px] w-[16px] items-center justify-center border border-[#1c68d8] bg-white text-[10px] leading-none tracking-[-0.5px] text-[#1040b0]">{children}</div>;
}

function Ico({ children }: { children: ReactNode }) {
  return (
    <svg width={20} height={18} viewBox="0 0 20 18" fill="none" stroke={BLUE}>
      {children}
    </svg>
  );
}

function Tool({ children }: { children: ReactNode }) {
  return <div className="flex h-[22px] items-center justify-center">{children}</div>;
}

function ToolText({ children }: { children: string }) {
  return <div className="flex h-[22px] items-center justify-center text-[13px] leading-none text-[#10409a]">{children}</div>;
}

function ToolBar() {
  return (
    <div className="flex w-[24px] flex-col bg-[#f0f0f0]">
      <div className="flex h-[775px] flex-col border-b border-[#a0a0a0]">
        <Tool><Ico><path d="M3 9l6-5v3h8v4H9v3z" /></Ico></Tool>
        <Tool><Ico><path d="M10 2l6 6h-3v7H7V8H4z" /></Ico></Tool>
        <Tool><Ico><path d="M10 16l6-6h-3V3H7v7H4z" /></Ico></Tool>
        <Tool><Ico><rect x={2.5} y={2.500} width={15} height={13} /><path d="M4 5h4M4 8h4" stroke="#1a9a1a" /><path d="M10 5h5M10 8h5" stroke="#e02020" /><circle cx={14} cy={12} r={3} stroke="#808080" /></Ico></Tool>
        <Tool><Ico><rect x={2.5} y={2.500} width={15} height={13} /><path d="M5 5v8" stroke="#e02020" strokeDasharray="2 1" strokeWidth={2} /><path d="M9 5v8" stroke="#1a9a1a" strokeDasharray="2 1" strokeWidth={2} /><path d="M13 5v8" stroke="#e02020" strokeDasharray="2 1" strokeWidth={2} /></Ico></Tool>
        <Tool><Ico><rect x={2.5} y={2.500} width={15} height={13} /><path d="M3 13l5-3 3 1 6-5" stroke="#e02020" /></Ico></Tool>
        <Tool><Ico><rect x={2.5} y={2.500} width={15} height={13} /><path d="M5.500 5v8M10 4v9M14.500 4v8" stroke="#e02020" /><path d="M4.500 7h2v4h-2zM9 6h2v3H9z" fill="#e02020" stroke="#e02020" /><path d="M13.500 6h2v4h-2z" fill="#1a9a1a" stroke="#1a9a1a" /></Ico></Tool>
        <Tool><Ico><rect x={6.5} y={1.500} width={12} height={11} /><rect x={1.5} y={4.500} width={13} height={11} fill="#fff" stroke="#445" /><path d="M3 8h10M3 10h10M3 12h10" stroke="#445" /></Ico></Tool>
        <Tool><Box>F10</Box></Tool>
        <Tool><Ico><rect x={2.5} y={2.500} width={15} height={13} /><path d="M5 5h6v3H5zM11 9h5v2h-5zM11 12h5v2h-5zM7 8v5h4" stroke="#e0a000" /></Ico></Tool>
        <Tool><Ico><rect x={2.5} y={2.500} width={15} height={13} /><path d="M6.500 5h7v9h-7zM6.500 8h7M6.500 11h7M9.500 3v2" stroke="#f06000" strokeWidth={1.500} /></Ico></Tool>
        <Tool><Box>F12</Box></Tool>
        <Tool><Ico><rect x={1.5} y={2.500} width={17} height={13} rx={4} stroke="#1a8a5a" /><path d="M9 5q-2 0-2 2v6q0 1-1.500 1M5 8h4" stroke="#10409a" /><path d="M11 7l4 5M15 7l-4 5" stroke="#10409a" /></Ico></Tool>
        <Tool><Ico><rect x={2.5} y={2.500} width={15} height={13} /><circle cx={10} cy={9} r={3.500} /></Ico></Tool>
        <div className="mx-[1px] mt-[3px] mb-[3px] h-px bg-[#b0b0b0]" />
        <Tool><Ico><rect x={2.5} y={2.500} width={15} height={13} /><path d="M4 7l2-2 2 2 2-2 2 2 2-2 2 2" stroke="#e02020" /><path d="M4 12l2-2 2 2 2-2 2 2 2-2 2 2" stroke="#1c68d8" /></Ico></Tool>
        <Tool><span className="text-[11px] font-bold leading-none text-[#2040c0]">RSI</span></Tool>
        <Tool><span className="text-[17px] font-bold leading-none text-[#d02020]">S</span></Tool>
        <Tool>
          <svg width={18} height={18} viewBox="0 0 18 18" fill="#1838a8">
            <path d="M9 1l3 3h-2v4h4V6l3 3-3 3v-2h-4v4h2l-3 3-3-3h2v-4H4v2L1 9l3-3v2h4V4H6z" />
          </svg>
        </Tool>
        <Tool>
          <svg width={18} height={18} viewBox="0 0 18 18">
            <path d="M3 12L12 3l3 3-9 9-4 1z" fill="#e09a30" stroke="#805010" />
            <path d="M12 3l3 3" stroke="#c03030" strokeWidth={2} />
          </svg>
        </Tool>
        <div className="mx-[1px] mt-[3px] mb-[5px] h-px bg-[#b0b0b0]" />
        <Tool><Box>F5</Box></Tool>
        <Tool>
          <div className="flex h-[14px] w-[16px] items-center justify-center border border-[#1c68d8] bg-white">
            <svg width={13} height={11} viewBox="0 0 14 12" fill="none" stroke="#30a030" strokeWidth={2}>
              <path d="M2 6a5 4 0 0 1 9-2M12 6a5 4 0 0 1-9 2" />
            </svg>
          </div>
        </Tool>
        <ToolText>1</ToolText>
        <ToolText>5</ToolText>
        <ToolText>15</ToolText>
        <ToolText>30</ToolText>
        <ToolText>60</ToolText>
        <div className="flex h-[22px] items-center justify-center border-y border-[#d8d8d8] bg-white text-[14px] leading-none text-[#10409a]">日</div>
        <ToolText>周</ToolText>
        <ToolText>月</ToolText>
        <ToolText>N</ToolText>
        <ToolText>多</ToolText>
        <ToolText>季</ToolText>
        <ToolText>年</ToolText>
      </div>
    </div>
  );
}

function MenuBar() {
  const items = [
    ['系统', 'w-[42px]'],
    ['功能', 'w-[43px]'],
    ['报价', 'w-[43px]'],
    ['分析', 'w-[43px]'],
    ['扩展市场行情', 'w-[85px]'],
    ['资讯', 'w-[42px]'],
    ['工具', 'w-[44px]'],
    ['帮助', 'w-[43px]'],
  ];
  return (
    <div className="relative flex h-[24px] items-center border-b-2 border-[#8c8c8c] bg-linear-to-b from-[#fafafa] to-[#c8c8c8] text-[12px] text-black">
      <svg className="ml-[2px]" width={16} height={18} viewBox="0 0 16 18">
        <rect x={0} y={1} width={16} height={16} fill="#e02020" />
        <path d="M3 9l3 5 8-11-7 6z" fill="#f4f4f4" />
      </svg>
      <div className="ml-[1px] flex">
        {items.map(([t, w]) => (
          <div key={t} className={`${w} text-center`}>{t}</div>
        ))}
      </div>
      <div className="ml-[11px] flex h-[22px] w-[41px] items-center justify-center border-x border-[#b0b0b0] bg-white text-[#ff0000]">股票池</div>
      <div className="absolute left-[1003px] top-[4px] whitespace-nowrap text-[#ff0000]">
        通达信金融终端<span className="ml-[13px] tracking-[6px]">农产品</span>
      </div>
      <div className="absolute left-[1702px] top-[2px] flex gap-[3px]">
        {['行情', '资讯', '交易', '服务'].map((t) => (
          <div key={t} className="flex h-[18px] w-[33px] items-center justify-center border border-[#909090] bg-[#e8e8e8] leading-none">{t}</div>
        ))}
      </div>
      <div className="absolute left-[1850px] top-[1px] flex gap-[2px]">
        <div className="flex h-[20px] w-[20px] items-center justify-center rounded-full border border-[#808080] bg-[#e4e4e4]">
          <div className="h-[2px] w-[10px] bg-[#606060]" />
        </div>
        <div className="flex h-[20px] w-[20px] items-center justify-center rounded-full border border-[#808080] bg-[#e4e4e4]">
          <svg width={12} height={12} viewBox="0 0 12 12" fill="none" stroke="#505050">
            <path d="M4.500 1.500h6v6h-2M1.500 4.500h6v6h-6zM4.500 1.500v3" />
          </svg>
        </div>
        <div className="flex h-[20px] w-[20px] items-center justify-center rounded-full border border-[#808080] bg-[#e4e4e4]">
          <svg width={12} height={12} viewBox="0 0 12 12" fill="none" stroke="#404040" strokeWidth={2.5}>
            <path d="M2 2l8 8M10 2l-8 8" />
          </svg>
        </div>
      </div>
    </div>
  );
}

function IndexCell({ name, value, change, pct, amount }: { name: string; value: string; change: string; pct: string; amount: string }) {
  return (
    <div className="flex w-[215px] items-center whitespace-nowrap">
      <span className="w-[26px] text-[12px]">{name}</span>
      <span className="w-[46px] font-bold text-[#ff0000]">{value}</span>
      <span className="w-[43px] text-right font-bold text-[#ff0000]">{change}</span>
      <span className="w-[45px] text-right font-bold text-[#ff0000]">{pct}</span>
      <span className="w-[47px] text-right text-[12px]">{amount}</span>
    </div>
  );
}

function Meter({ mark }: { mark: number }) {
  return (
    <svg width={50} height={18} viewBox="0 0 50 18" shapeRendering="crispEdges">
      {[0, 10, 20, 30, 40].map((x) => (
        <rect key={x} x={x + 0.5} y={1.5} width={9} height={5} fill="#f4f4f4" stroke="#c8c8c8" />
      ))}
      <rect x={mark} y={0} width={mark > 22 ? 6 : 2} height={7} fill="#e00000" />
      {[0, 8, 16, 28, 35, 42].map((x) => (
        <g key={x}>
          <rect x={x} y={10} width={6} height={2} fill="#e00000" />
          <rect x={x} y={14} width={6} height={2} fill="#e00000" />
        </g>
      ))}
      <path d="M24 9l-3 3h2v5h2v-5h2z" fill="#e00000" />
    </svg>
  );
}

function StatusBar() {
  return (
    <div className="flex h-[21px] items-center bg-[#f0f0f0] text-[13px] text-black">
      <IndexCell name="上证" value="3226.66" change="33.80" pct="1.06%" amount="1217亿" />
      <IndexCell name="深证" value="10948.9" change="59.83" pct="0.55%" amount="1517亿" />
      <IndexCell name="中小" value="6951.77" change="22.80" pct="0.33%" amount="686.3亿" />
      <IndexCell name="沪深" value="3460.69" change="43.23" pct="1.26%" amount="694.9亿" />
      <IndexCell name="创业" value="2161.06" change="3.10" pct="0.14%" amount="409.1亿" />
      <div className="ml-[2px] flex h-full w-[108px] items-center gap-[2px] border-x border-[#a0a0a0] pl-[3px]">
        <Meter mark={20} />
        <Meter mark={18} />
      </div>
      <span className="ml-[4px] whitespace-nowrap text-[12px]">武汉行情主站</span>
      <div className="ml-auto mr-[3px] flex items-center gap-[4px]">
        <svg width={14} height={14} viewBox="0 0 14 14">
          <rect x={1} y={2} width={12} height={10} rx={3} fill="#d8c020" stroke="#605010" />
          <path d="M7 4l3 3H8v3H6V7H4z" fill="#604000" />
        </svg>
        <svg width={14} height={16} viewBox="0 0 14 16" fill="none" stroke="#606060">
          <path d="M7 6v3M5 15l2-6 2 6M4 14h6M3 3q-2 3 0 6M11 3q2 3 0 6" />
          <circle cx={7} cy={5} r={1.5} />
        </svg>
        <svg width={10} height={16} viewBox="0 0 10 16">
          <path d="M5 1l3 4H2z" fill="#e00000" />
          <path d="M5 6l3 4H2z" fill="#e8c000" />
          <path d="M5 11l3 4H2z" fill="#00a000" />
        </svg>
        <svg width={6} height={14} viewBox="0 0 6 14">
          <circle cx={3} cy={3} r={2} fill="#808080" />
          <path d="M3 5v7" stroke="#808080" />
        </svg>
      </div>
    </div>
  );
}

export default function App() {
  return (
    <div className="flex h-[1044px] w-[1920px] flex-col overflow-hidden bg-black font-['Liberation_Sans','Noto_Sans_CJK_SC',sans-serif]">
      <MenuBar />
      <div className="flex h-[995px] bg-black">
        <ChartArea />
        <OrderPanel />
        <ToolBar />
      </div>
      <StatusBar />
      <div className="h-[4px] border-t border-[#404040] bg-[#bcd0e8]" />
    </div>
  );
}
